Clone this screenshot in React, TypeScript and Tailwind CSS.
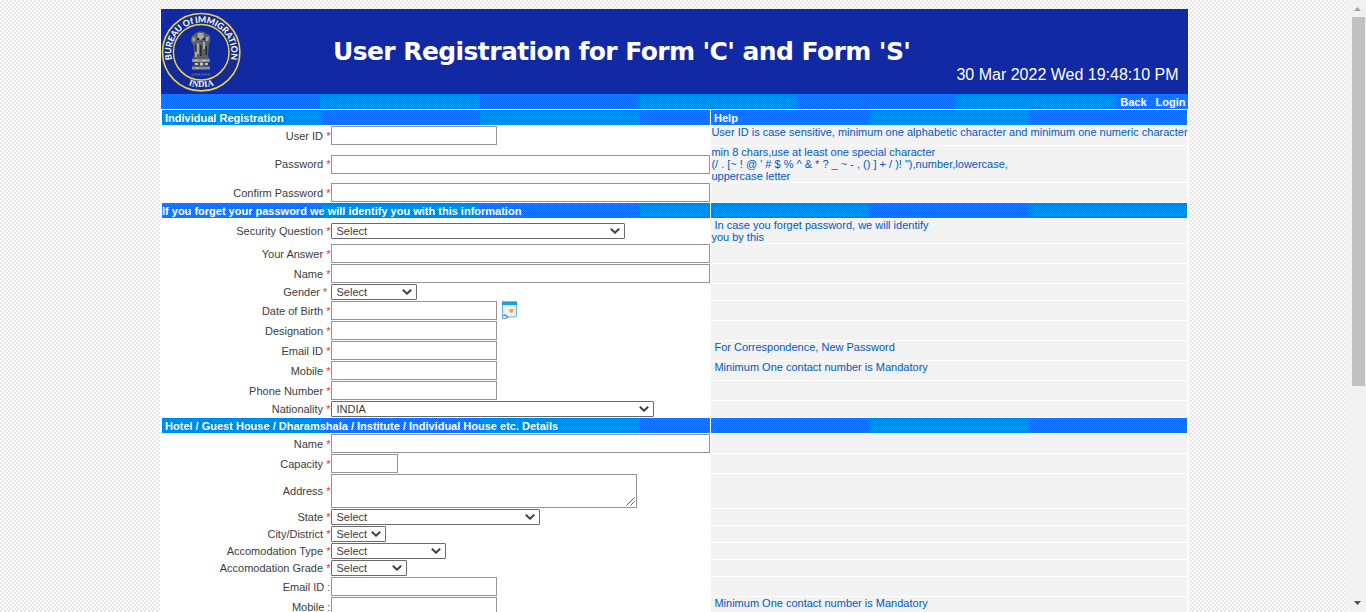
import type { ReactNode } from 'react';

const STRIPES = [0, 1, 2, 3, 4, 5, 6];

function BlueBar({ children, className = '' }: { children?: ReactNode; className?: string }) {
  return (
    <div className={`relative h-[15px] overflow-hidden text-white font-bold leading-[15px] ${className}`}>
      <div className="absolute inset-0 flex">
        {STRIPES.map((i) => (
          <div
            key={i}
            className="h-full w-[159px] shrink-0 bg-[repeating-conic-gradient(#0066ff_0_25%,#0099ff_0_50%)] bg-[length:2px_2px]"
          />
        ))}
      </div>
      <div className="relative whitespace-pre pt-px">{children}</div>
    </div>
  );
}

function Emblem() {
  return (
    <svg className="block h-[82px] w-[82px]" viewBox="0 0 82 82">
      <defs>
        <path id="arc-top" d="M12.9 55.1 A30 30 0 1 1 67.5 55.1" />
        <path id="arc-bottom" d="M10.2 61 A35.6 35.6 0 0 0 70.2 61" />
      </defs>
      <circle cx="40.2" cy="42.2" r="38.7" fill="#142b94" stroke="#e8d44c" strokeWidth="1.6" />
      <circle cx="40.2" cy="42.2" r="27.8" fill="#1129a0" stroke="#e8d44c" strokeWidth="1.5" />
      <text fill="#f4f4f4" fontFamily="Lato, sans-serif" fontWeight="900" fontSize="8.8">
        <textPath href="#arc-top" startOffset="50%" textAnchor="middle" textLength="108" lengthAdjust="spacing">
          BUREAU Of IMMIGRATION
        </textPath>
      </text>
      <text fill="#f4f4f4" fontFamily="Liberation Serif, serif" fontWeight="700" fontSize="9">
        <textPath href="#arc-bottom" startOffset="50%" textAnchor="middle">
          INDIA
        </textPath>
      </text>
      <path d="M35 23 Q36 21 40 21.5 Q44 21 45 23.5 L48.5 25 Q50.5 30 48 34 L47 46 L48.5 49 H31.5 L33 46 L32.5 36 Q28.5 30 31 26Z" fill="#5d6064" />
      <path d="M37 23h5l1 4-3.5 3-3-3zM31.5 27l3 1-1 4-2-1zM45 27l3 0-1 4-2 0zM36 33h2v11h-2zM42 32h2v7h-2zM34 42h2v5h-2z" fill="#a5a8a6" />
      <path d="M39 35h1.5v11H39zM44.5 36H46v9h-1.5zM34 35h1v6h-1zM36 28h2v2h-2zM42 28h2v2h-2z" fill="#25292f" />
      <path d="M31 49h18v3H31zM31 56.5h18v3H31z" fill="#8b8f92" />
      <path d="M32.5 52h15v4.5h-15z" fill="#4a4f57" />
      <path d="M34 53h3v2h-3zM39 52.5h3v3h-3zM44 53h3v2h-3zM33 50h4v1h-4zM41 50h5v1h-5zM34 57.5h4v1h-4z" fill="#c0c2c0" />
      <path d="M30.5 64.5h19" stroke="#5d6894" strokeWidth="2" strokeDasharray="1.6 .7" />
    </svg>
  );
}

function CalendarIcon() {
  return (
    <svg className="ml-[5px] h-[19px] w-[16px]" viewBox="0 0 16 19">
      <rect x="0.5" y="0.5" width="14" height="15.5" rx="1" fill="#dfe9f1" stroke="#6fb3e6" />
      <path d="M0 1h15v3H0z" fill="#1e9be6" />
      <path d="M0 0h15v1H0z" fill="#64c0f2" />
      <path d="M2 7h11M2 10h11M2 13h11M4.5 5v10M7.5 5v10M10.5 5v10" stroke="#fbfdff" strokeWidth="0.8" />
      <path d="M7.5 8h3.5v3.5H7.5z" fill="#ff9e1e" />
      <path d="M6.5 9h1v2h-1zM11 7l1 1-1 3z" fill="#ffc873" />
      <path d="M0 17c0-3 2-3 3-4l3 2v2l-3 1H1z" fill="#5f93c0" />
      <path d="M1 15h3v2H1z" fill="#dfeefa" />
    </svg>
  );
}

function Select({ value, width }: { value: string; width: string }) {
  return (
    <div className={`flex h-4 items-center justify-between rounded-[1px] border border-[#6b6b6b] bg-white pl-[4.5px] pr-1 text-[#3c3c3c] ${width}`}>
      <span>{value}</span>
      <svg className="h-[6px] w-[10px]" viewBox="0 0 10 6">
        <path d="M0.8 0.8L5 4.7 9.2 0.8" fill="none" stroke="#3c3c3c" strokeWidth="1.9" />
      </svg>
    </div>
  );
}

function Input({ width }: { width: string }) {
  return <div className={`h-[19px] border border-[#949494] bg-white ${width}`} />;
}

function TextArea() {
  return (
    <div className="flex h-[34px] w-[306px] items-end justify-end border border-[#949494] bg-white">
      <svg className="m-px h-[9px] w-[9px]" viewBox="0 0 9 9">
        <path d="M0.5 8.5l8-8M4.5 8.5l4-4" stroke="#555" strokeWidth="0.9" />
      </svg>
    </div>
  );
}

type RowProps = {
  label: string;
  height: string;
  help?: string;
  optional?: boolean;
  trail?: string;
  children: ReactNode;
};

function Row({ label, height, help, optional, trail = 'pr-[0.6px]', children }: RowProps) {
  return (
    <div className={`flex gap-px ${height}`}>
      <div className="flex w-[548px] items-center">
        <div className={`w-[169px] whitespace-pre text-right leading-3 text-[#3c3c3c] ${trail}`}>
          {label} <span className={optional ? 'text-[#804080]' : 'text-[#ff2a2a]'}>{optional ? ':' : '*'}</span>
        </div>
        {children}
      </div>
      <div className="w-[476px] whitespace-pre bg-[#f2f2f2] pl-[0.4px] leading-3 text-[#0059c4]">{help}</div>
    </div>
  );
}

function Section({ left, right }: { left: string; right?: string }) {
  return (
    <div className="flex gap-px">
      <BlueBar className="w-[548px]">{left}</BlueBar>
      <BlueBar className="w-[476px]">{right}</BlueBar>
    </div>
  );
}

export default function App() {
  return (
    <div className="flex h-[612px] overflow-hidden bg-[repeating-conic-gradient(#e7e7e7_0_25%,#fdfdfd_0_50%)] bg-[length:4px_4px] font-['Liberation_Sans',Arial,sans-serif] text-[11px]">
      <div className="ml-[160px] mt-[9px] w-[1029px] shrink-0 bg-white">
        <div className="mx-px flex h-[85px] w-[1027px] bg-[#1129a3] text-white">
          <div className="w-[82px] pt-px">
            <Emblem />
          </div>
          <h1 className="ml-[90px] mt-[27px] w-[600px] whitespace-nowrap font-['DejaVu_Sans',sans-serif] text-[25px] font-bold leading-8 tracking-[-0.59px]">
            User Registration for Form 'C' and Form 'S'
          </h1>
          <div className="ml-auto mr-[9.5px] mt-[57px] whitespace-nowrap text-base leading-[18px]">30 Mar 2022 Wed 19:48:10 PM</div>
        </div>
        <div className="mx-px">
          <BlueBar className="w-[1027px]">
            <div className="flex justify-end gap-[9px] pr-[2.5px]">
              <span>Back</span>
              <span>Login</span>
            </div>
          </BlueBar>
        </div>
        <div className="ml-[2px] mt-px flex w-[1025px] flex-col gap-px">
          <Section left=" Individual Registration" right=" Help" />
          <Row label="User ID" height="h-[19px]" help="User ID is case sensitive, minimum one alphabetic character and minimum one numeric character">
            <Input width="w-[166px]" />
          </Row>
          <Row
            label="Password"
            height="h-[36px]"
            help={"min 8 chars,use at least one special character\n(/ . [~ ! @ ' # $ % ^ & * ? _ ~ - , () ] + / )! \"),number,lowercase,\nuppercase letter"}
          >
            <Input width="w-[379px]" />
          </Row>
          <Row label="Confirm Password" height="h-[19px]">
            <Input width="w-[379px]" />
          </Row>
          <Section left="If you forget your password we will identify you with this information" />
          <Row label="Security Question" height="h-[24px]" help={' In case you forget password, we will identify\nyou by this'}>
            <Select value="Select" width="w-[294px]" />
          </Row>
          <Row label="Your Answer" height="h-[19px]">
            <Input width="w-[379px]" />
          </Row>
          <Row label="Name" height="h-[19px]">
            <Input width="w-[379px]" />
          </Row>
          <Row label="Gender" height="h-[16px]" trail="pr-[3.7px]">
            <Select value="Select" width="w-[86px]" />
          </Row>
          <Row label="Date of Birth" height="h-[19px]">
            <Input width="w-[166px]" />
            <CalendarIcon />
          </Row>
          <Row label="Designation" height="h-[19px]">
            <Input width="w-[166px]" />
          </Row>
          <Row label="Email ID" height="h-[19px]" help=" For Correspondence, New Password">
            <Input width="w-[166px]" />
          </Row>
          <Row label="Mobile" height="h-[19px]" help=" Minimum One contact number is Mandatory">
            <Input width="w-[166px]" />
          </Row>
          <Row label="Phone Number" height="h-[19px]">
            <Input width="w-[166px]" />
          </Row>
          <Row label="Nationality" height="h-[16px]">
            <Select value="INDIA" width="w-[323px]" />
          </Row>
          <Section left=" Hotel / Guest House / Dharamshala / Institute / Individual House etc. Details" />
          <Row label="Name" height="h-[19px]">
            <Input width="w-[379px]" />
          </Row>
          <Row label="Capacity" height="h-[19px]">
            <Input width="w-[67px]" />
          </Row>
          <Row label="Address" height="h-[34px]">
            <TextArea />
          </Row>
          <Row label="State" height="h-[16px]">
            <Select value="Select" width="w-[209px]" />
          </Row>
          <Row label="City/District" height="h-[16px]">
            <Select value="Select" width="w-[55px]" />
          </Row>
          <Row label="Accomodation Type" height="h-[16px]">
            <Select value="Select" width="w-[115px]" />
          </Row>
          <Row label="Accomodation Grade" height="h-[16px]">
            <Select value="Select" width="w-[76px]" />
          </Row>
          <Row label="Email ID" height="h-[19px]" optional>
            <Input width="w-[166px]" />
          </Row>
          <Row label="Mobile" height="h-[19px]" optional help=" Minimum One contact number is Mandatory">
            <Input width="w-[166px]" />
          </Row>
        </div>
      </div>
      <div className="ml-auto flex w-[17px] shrink-0 flex-col items-center bg-[#f1f1f1]">
        <svg className="mt-[7px] h-1 w-[7px]" viewBox="0 0 7 4">
          <path d="M0 4L3.5 0 7 4z" fill="#a3a3a3" />
        </svg>
        <div className="ml-px mt-[6px] h-[369px] w-[13px] bg-[#c1c1c1]" />
        <svg className="mb-[7px] mt-auto h-1 w-[7px]" viewBox="0 0 7 4">
          <path d="M0 0L3.5 4 7 0z" fill="#505050" />
        </svg>
      </div>
    </div>
  );
}
